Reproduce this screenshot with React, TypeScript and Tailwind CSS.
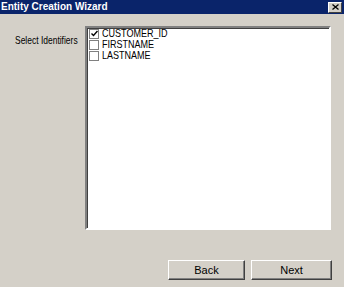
import { useState } from 'react';

const fields = ['CUSTOMER_ID', 'FIRSTNAME', 'LASTNAME'];

function Check({ on }: { on: boolean }) {
  return (
    <span className="w-[10px] h-[10px] bg-white border border-[#808080] flex items-center justify-center shrink-0">
      {on && (
        <svg width="7" height="7" viewBox="0 0 7 7">
          <path d="M0.5 3.5 L2.5 5.5 L6.5 1" stroke="#000" strokeWidth="1.4" fill="none" />
        </svg>
      )}
    </span>
  );
}

function WinButton({ label, w }: { label: string; w: string }) {
  return (
    <button
      className={`${w} h-[20px] bg-[#d4d0c8] text-[11px] text-black border border-t-white border-l-white border-r-[#404040] border-b-[#404040] shadow-[inset_-1px_-1px_0_#808080]`}
    >
      {label}
    </button>
  );
}

export default function App() {
  const [checked, setChecked] = useState([true, false, false]);

  return (
    <div className="w-[344px] h-[287px] bg-[#d4d0c8] flex flex-col font-['Liberation_Sans',Arial,sans-serif]">
      {/* Title bar */}
      <div className="h-[14px] shrink-0 bg-[#0a246a] flex items-center justify-between pl-[1px] pr-[2px]">
        <span className="text-white text-[10px] font-bold leading-none">Entity Creation Wizard</span>
        <span className="w-[14px] h-[11px] bg-[#d4d0c8] border border-t-white border-l-white border-r-[#404040] border-b-[#404040] flex items-center justify-center">
          <svg width="7" height="6" viewBox="0 0 7 6">
            <path d="M0.5 0.5 L6.5 5.5 M6.5 0.5 L0.5 5.5" stroke="#000" strokeWidth="1.3" />
          </svg>
        </span>
      </div>

      {/* Body */}
      <div className="flex pt-[12px] pl-[15px]">
        <span className="w-[70px] shrink-0 whitespace-nowrap pt-[1px]">
          <span className="inline-block origin-left scale-x-[0.77] text-[11px] text-black leading-[12px]">
            Select Identifiers
          </span>
        </span>
        <div className="w-[246px] h-[204px] shrink-0 bg-white border-2 border-t-[#808080] border-l-[#808080] border-r-white border-b-white shadow-[inset_1px_1px_0_#404040] pl-[2px]">
          {fields.map((f, i) => (
            <div
              key={f}
              className="flex items-center gap-[3px] h-[11px] cursor-default"
              onClick={() => setChecked(checked.map((c, j) => (j === i ? !c : c)))}
            >
              <Check on={checked[i]} />
              <span className="inline-block origin-left scale-x-[0.82] text-[11px] text-black leading-none whitespace-nowrap">
                {f}
              </span>
            </div>
          ))}
        </div>
      </div>

      {/* Buttons */}
      <div className="flex justify-end gap-[6px] pr-[12px] mt-[30px]">
        <WinButton label="Back" w="w-[77px]" />
        <WinButton label="Next" w="w-[81px]" />
      </div>
    </div>
  );
}
